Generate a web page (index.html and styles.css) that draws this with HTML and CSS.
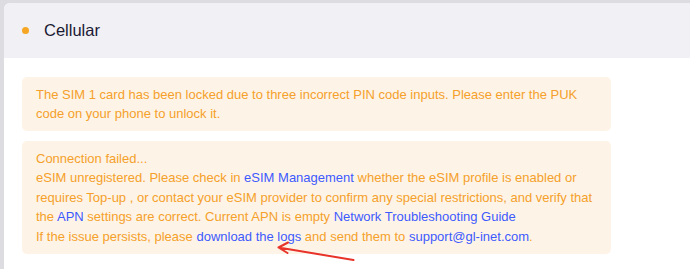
FILE: index.html
```html
<!DOCTYPE html>
<html lang="en">
<head>
<meta charset="utf-8">
<link rel="stylesheet" href="styles.css">
</head>
<body>
<div class="card">
  <div class="card-header">
    <span class="dot"></span>
    <span class="title">Cellular</span>
  </div>
  <div class="card-body">
    <div class="alert">The SIM 1 card has been locked due to three incorrect PIN code inputs. Please enter the PUK code on your phone to unlock it.</div>
    <div class="alert">Connection failed...<br>eSIM unregistered. Please check in <a class="link">eSIM Management</a> whether the eSIM profile is enabled or requires Top-up , or contact your eSIM provider to confirm any special restrictions, and verify that the <a class="link">APN</a> settings are correct. Current APN is empty <a class="link">Network Troubleshooting Guide</a><br>If the issue persists, please <a class="link">download the logs</a> and send them to <a class="link">support@gl-inet.com</a>.</div>
    <svg class="arrow" width="90" height="26" viewBox="0 0 90 26">
      <path d="M76.5 22 L1.5 9.5 M1.5 9.5 L11 4.5 M1.5 9.5 L10.5 15" fill="none" stroke="#e8332a" stroke-width="2" stroke-linecap="round"/>
    </svg>
  </div>
</div>
</body>
</html>
```
FILE: styles.css
```css
html, body {
  margin: 0;
  padding: 0;
}
body {
  background: #dcdce1;
  font-family: "Liberation Sans", Arial, sans-serif;
  overflow: hidden;
  height: 269px;
}
.card {
  margin: 3px 0 0 4px;
  background: #ffffff;
  border-radius: 6px 0 0 0;
  height: 266px;
  overflow: hidden;
}
.card-header {
  height: 55px;
  background: #f1f0f5;
  display: flex;
  align-items: center;
  padding-left: 18px;
}
.dot {
  width: 7px;
  height: 7px;
  border-radius: 50%;
  background: #f5a623;
  margin-right: 15px;
}
.title {
  font-size: 16.5px;
  color: #1a1a33;
}
.card-body {
  position: relative;
  padding: 19px 0 0 18px;
  display: flex;
  flex-direction: column;
  gap: 10px;
}
.alert {
  width: 561px;
  background: #fdf4e7;
  border-radius: 5px;
  padding: 7.5px 14px;
  font-size: 13px;
  line-height: 19.5px;
  color: #f5a02a;
}
.link {
  color: #3d5afe;
  text-decoration: none;
}
.arrow {
  position: absolute;
  left: 272.5px;
  top: 179.8px;
}
```
